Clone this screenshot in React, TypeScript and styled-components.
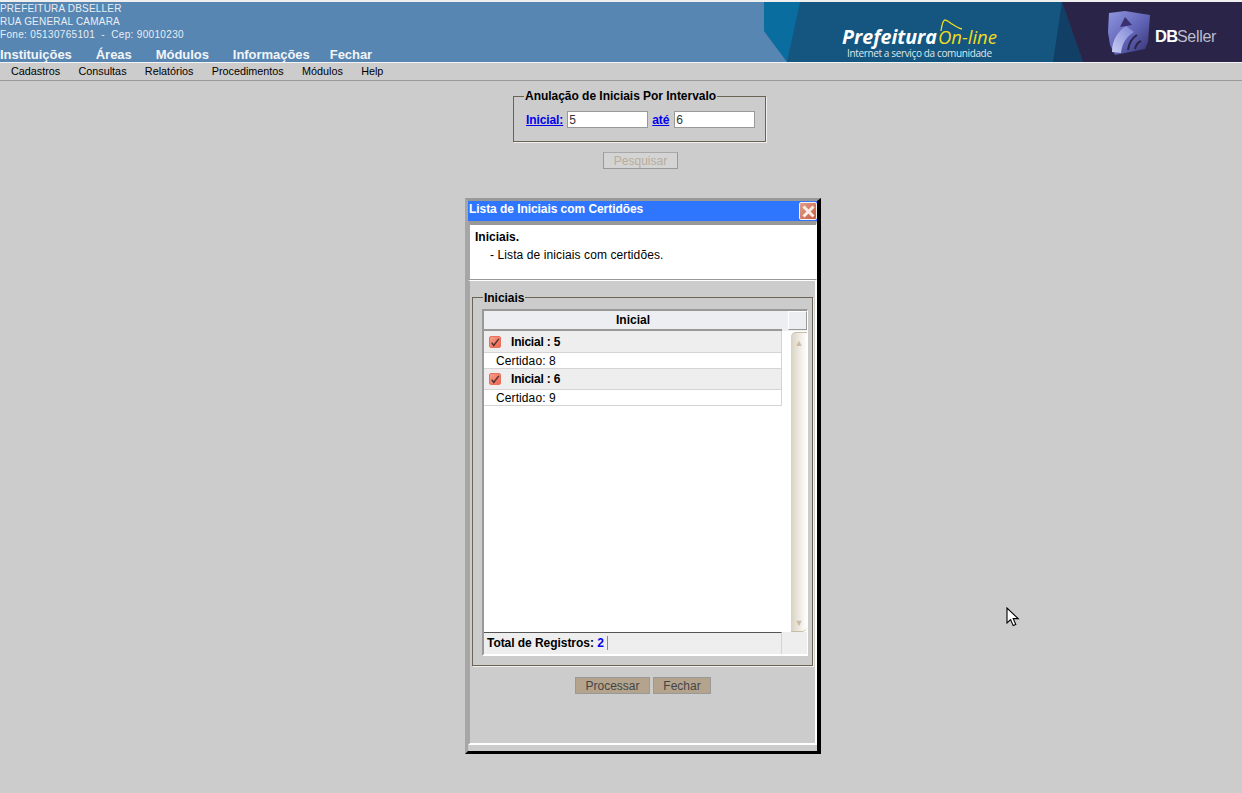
import React from 'react';
import styled, { createGlobalStyle } from 'styled-components';

const GlobalStyle = createGlobalStyle`
  html, body {
    margin: 0;
    padding: 0;
    height: 100%;
    background: #cccccc;
    font-family: "Liberation Sans", Arial, sans-serif;
    overflow: hidden;
  }
`;

const navItems = ['Instituições', 'Áreas', 'Módulos', 'Informações', 'Fechar'];
const menuItems = ['Cadastros', 'Consultas', 'Relatórios', 'Procedimentos', 'Módulos', 'Help'];
const records = [
  { inicial: 5, certidao: 8 },
  { inicial: 6, certidao: 9 },
];

function Banner() {
  return (
    <BannerSvg width="478" height="60" viewBox="0 0 478 60">
      <defs>
        <linearGradient id="cube" x1="0" y1="0" x2="1" y2="1">
          <stop offset="0" stopColor="#8f96e0" />
          <stop offset="0.55" stopColor="#5f62b4" />
          <stop offset="1" stopColor="#34306e" />
        </linearGradient>
        <linearGradient id="sweep" x1="0" y1="1" x2="1" y2="0">
          <stop offset="0" stopColor="#c9cdf4" />
          <stop offset="1" stopColor="#7e84d4" />
        </linearGradient>
      </defs>
      <rect width="478" height="60" fill="#14567f" />
      <polygon points="0,0 36,0 23,60 0,29" fill="#0a6d9f" />
      <polygon points="0,29 23,60 0,60" fill="#5786b3" />
      <polygon points="298,0 319,60 289,60" fill="#123f66" />
      <polygon points="298,0 478,0 478,60 319,60" fill="#2a2548" />
      <text x="78" y="42" fontFamily="'Open Sans', sans-serif" fontStyle="italic" fontWeight="700" fontSize="19" fill="#ffffff" textLength="95" lengthAdjust="spacingAndGlyphs">
        Prefeitura
      </text>
      <text x="174" y="42" fontFamily="'Open Sans', sans-serif" fontStyle="italic" fontSize="19" fill="#f2dc1e" textLength="59" lengthAdjust="spacingAndGlyphs">
        On-line
      </text>
      <path d="M177 29c1-7 2-11 4-11s4 2 7 4 6 4 10 5" fill="none" stroke="#f2dc1e" strokeWidth="1.3" />
      <text x="83" y="55" fontFamily="'Open Sans', sans-serif" fontSize="10" fill="#dfe8ee" textLength="145">
        Internet a serviço da comunidade
      </text>
      <polygon points="345,11 361,9 386,13 384,40 381,47 351,53 346,43 344,30" fill="url(#cube)" />
      <path d="M348 50c0-14 8-22 14-26l8 6c-7 4-12 11-13 21z" fill="url(#sweep)" />
      <polygon points="361,15 368,23 356,25" fill="#3a2f70" />
      <path d="M364 48c1-7 4-12 9-15M371 47c1-4 3-7 6-8" stroke="#2a2548" strokeWidth="2" fill="none" />
      <text x="391" y="40" fontFamily="'Liberation Sans', sans-serif" fontWeight="700" fontSize="16.5" fill="#ffffff" letterSpacing="-0.7">
        DB
      </text>
      <text x="413" y="40" fontFamily="'Liberation Sans', sans-serif" fontSize="16" fill="#bdbdcc" letterSpacing="-0.3">
        Seller
      </text>
    </BannerSvg>
  );
}

function RecordRows({ inicial, certidao }: { inicial: number; certidao: number }) {
  return (
    <>
      <GroupRow>
        <CheckBox>
          <svg width="12" height="12" viewBox="0 0 12 12">
            <path d="M2 5.5l2.5 3.5L10.5 1" fill="none" stroke="#4a3430" strokeWidth="1.7" />
          </svg>
        </CheckBox>
        <GroupLabel>Inicial : {inicial}</GroupLabel>
      </GroupRow>
      <DetailRow>Certidao: {certidao}</DetailRow>
    </>
  );
}

export default function App() {
  return (
    <Page>
      <GlobalStyle />
      <Header>
        <HeaderInfo>
          <AddressBlock>
            <div>PREFEITURA DBSELLER</div>
            <div>RUA GENERAL CAMARA</div>
            <PhoneLine>Fone: 05130765101&nbsp; -&nbsp; Cep: 90010230</PhoneLine>
          </AddressBlock>
          <Nav>
            {navItems.map((item) => (
              <NavItem key={item}>{item}</NavItem>
            ))}
          </Nav>
        </HeaderInfo>
        <Banner />
      </Header>
      <MenuBar>
        {menuItems.map((item) => (
          <MenuItem key={item}>{item}</MenuItem>
        ))}
      </MenuBar>

      <FormArea>
        <RangeFieldset>
          <Legend>Anulação de Iniciais Por Intervalo</Legend>
          <RangeRow>
            <FieldLink>Inicial:</FieldLink>
            <RangeInput value="5" readOnly />
            <FieldLink>até</FieldLink>
            <RangeInput value="6" readOnly />
          </RangeRow>
        </RangeFieldset>
        <SearchButton disabled>Pesquisar</SearchButton>
      </FormArea>

      <Window>
        <TitleBar>
          <TitleText>Lista de Iniciais com Certidões</TitleText>
          <CloseButton>
            <svg width="13" height="13" viewBox="0 0 13 13">
              <path d="M1.5 1.5l10 10M11.5 1.5l-10 10" stroke="#fbeee9" strokeWidth="3" />
            </svg>
          </CloseButton>
        </TitleBar>
        <HelpPanel>
          <HelpTitle>Iniciais.</HelpTitle>
          <HelpText>- Lista de iniciais com certidões.</HelpText>
        </HelpPanel>
        <WindowBody>
          <GridFieldset>
            <GridLegend>Iniciais</GridLegend>
            <GridBox>
              <GridHeader>
                <HeaderCell>Inicial</HeaderCell>
                <CornerCell />
              </GridHeader>
              <GridMiddle>
                <Rows>
                  {records.map((record) => (
                    <RecordRows key={record.inicial} {...record} />
                  ))}
                </Rows>
                <ScrollTrack>
                  <ScrollArrow>▲</ScrollArrow>
                  <ScrollArrow>▼</ScrollArrow>
                </ScrollTrack>
              </GridMiddle>
              <GridFooter>
                <FooterCell>
                  <FooterLabel>
                    Total de Registros: <FooterCount>2</FooterCount>
                  </FooterLabel>
                </FooterCell>
                <FooterSpacer />
              </GridFooter>
            </GridBox>
          </GridFieldset>
          <Actions>
            <ActionButton $width={75}>Processar</ActionButton>
            <ActionButton $width={58}>Fechar</ActionButton>
          </Actions>
        </WindowBody>
      </Window>

      <Cursor width="14" height="20" viewBox="0 0 14 20">
        <path d="M1 1v15l3.6-3.4 2.6 6 2.6-1.1-2.6-5.9h5z" fill="#ffffff" stroke="#000000" strokeWidth="1.1" />
      </Cursor>
    </Page>
  );
}

const Page = styled.div`
  position: relative;
  width: 1242px;
  height: 793px;
  overflow: hidden;
  background: #cccccc;
  border-top: 2px solid #efefef;
  box-sizing: border-box;
`;

const Header = styled.header`
  display: flex;
  justify-content: space-between;
  height: 60px;
  background: #5786b3;
`;

const HeaderInfo = styled.div`
  display: flex;
  flex-direction: column;
  justify-content: space-between;
  color: #ffffff;
`;

const AddressBlock = styled.div`
  font-size: 10px;
  line-height: 13px;
  color: #e9eef4;
  letter-spacing: 0.2px;
`;

const PhoneLine = styled.div`
  letter-spacing: 0.33px;
`;

const Nav = styled.nav`
  display: flex;
  gap: 24px;
  height: 15px;
  line-height: 15px;
`;

const NavItem = styled.span`
  font-size: 13px;
  font-weight: 700;
  color: #f2f5f8;
  letter-spacing: -0.04px;
  &:last-child {
    margin-left: -4px;
  }
`;

const BannerSvg = styled.svg`
  display: block;
  flex: none;
`;

const MenuBar = styled.div`
  display: flex;
  gap: 18.3px;
  box-sizing: content-box;
  height: 15px;
  padding: 0 0 2px 11px;
  align-items: center;
  border-top: 1px solid #f4f4f4;
  border-bottom: 1px solid #9a9a9a;
`;

const MenuItem = styled.span`
  font-size: 10.8px;
  color: #000000;
`;

const FormArea = styled.div`
  display: flex;
  flex-direction: column;
  align-items: center;
  width: 1279px;
  padding-top: 9px;
`;

const RangeFieldset = styled.fieldset`
  box-sizing: border-box;
  width: 253px;
  height: 52px;
  margin: 0;
  padding: 0 0 0 12px;
  border: 1px solid #6b6353;
  box-shadow: 1px 1px 0 #eeeeee;
`;

const Legend = styled.legend`
  margin-left: -2px;
  padding: 0 1px;
  font-size: 12px;
  line-height: 13px;
  font-weight: 700;
  color: #000000;
  letter-spacing: -0.03px;
`;

const GridLegend = styled(Legend)`
  margin-left: 1px;
  padding-top: 2px;
`;

const RangeRow = styled.div`
  display: flex;
  align-items: center;
  gap: 4px;
  margin-top: 8px;
`;

const FieldLink = styled.a`
  font-size: 12px;
  font-weight: 700;
  color: #0000ee;
  text-decoration: underline;
  letter-spacing: -0.1px;
`;

const RangeInput = styled.input`
  box-sizing: border-box;
  width: 81px;
  height: 17px;
  padding: 0 1px;
  border: 1px solid #999999;
  background: #ffffff;
  font-family: "Liberation Sans", Arial, sans-serif;
  font-size: 12px;
  color: #333333;
  &:last-child {
    margin-left: 1px;
  }
`;

const SearchButton = styled.button`
  box-sizing: border-box;
  width: 75px;
  height: 17px;
  margin: 10px 0 0 2px;
  padding: 0;
  border: 1px solid #999999;
  border-top-color: #a8a8a8;
  background: #d4d4d4;
  font-family: "Liberation Sans", Arial, sans-serif;
  font-size: 12px;
  color: #b8ad9a;
`;

const Window = styled.section`
  position: absolute;
  left: 465px;
  top: 196px;
  box-sizing: border-box;
  width: 356px;
  height: 556px;
  display: flex;
  flex-direction: column;
  background: #cccccc;
  border-style: solid;
  border-width: 3px 4px 3px 3px;
  border-color: #999999 #000000 #000000 #a6a6a6;
`;

const TitleBar = styled.div`
  display: flex;
  flex: none;
  justify-content: space-between;
  height: 20px;
  background: #2f76ff;
`;

const TitleText = styled.span`
  padding-left: 1px;
  font-size: 12px;
  font-weight: 700;
  line-height: 16px;
  color: #ffffff;
  letter-spacing: -0.06px;
`;

const CloseButton = styled.span`
  display: flex;
  align-items: center;
  justify-content: center;
  box-sizing: border-box;
  width: 18px;
  height: 18px;
  margin: 1px 0 0;
  border: 1px solid #f2f2f2;
  border-radius: 2px;
  background: linear-gradient(135deg, #e0a08c, #cc5c40);
`;

const HelpPanel = styled.div`
  box-sizing: border-box;
  flex: none;
  height: 59px;
  padding: 4px 0 0 5px;
  border-top: 4px solid #999999;
  border-left: 2px solid #a6a6a6;
  border-right: 1px solid #ffffff;
  border-bottom: 1px solid #999999;
  background: #ffffff;
  color: #000000;
  font-size: 12px;
  line-height: 17px;
`;

const HelpTitle = styled.div`
  font-weight: 700;
  margin-bottom: 1px;
`;

const HelpText = styled.div`
  padding-left: 15px;
  letter-spacing: 0.1px;
`;

const WindowBody = styled.div`
  flex: 1;
  display: flex;
  flex-direction: column;
  align-items: center;
  box-sizing: border-box;
  margin-bottom: 6px;
  padding: 9px 0 0;
  border-top: 1px solid #ffffff;
  border-left: 2px solid #a6a6a6;
  border-right: 2px solid #ffffff;
  border-bottom: 2px solid #ffffff;
`;

const GridFieldset = styled.fieldset`
  box-sizing: border-box;
  width: 341px;
  height: 376px;
  margin: 0;
  padding: 0 0 0 9px;
  border: 1px solid #6b6353;
  box-shadow: 1px 1px 0 #eeeeee;
`;

const GridBox = styled.div`
  box-sizing: border-box;
  width: 326px;
  height: 347px;
  margin-top: 4px;
  display: flex;
  flex-direction: column;
  background: #ffffff;
  border-style: solid;
  border-width: 2px 1px 2px 2px;
  border-color: #999999 #ffffff #ffffff #999999;
`;

const GridHeader = styled.div`
  display: flex;
  flex: none;
  justify-content: space-between;
  height: 20px;
  background: #eceef2;
`;

const HeaderCell = styled.div`
  box-sizing: border-box;
  width: 298px;
  border-bottom: 2px solid #999999;
  text-align: center;
  font-size: 12px;
  line-height: 18px;
  font-weight: 700;
  color: #000000;
`;

const CornerCell = styled.div`
  box-sizing: border-box;
  width: 19px;
  height: 19px;
  border: 1px solid #999999;
  border-top-color: #ffffff;
  border-left-color: #ffffff;
  background: #eceef2;
`;

const GridMiddle = styled.div`
  flex: 1;
  display: flex;
  justify-content: space-between;
  min-height: 0;
`;

const Rows = styled.div`
  width: 298px;
`;

const GroupRow = styled.div`
  box-sizing: border-box;
  display: flex;
  align-items: center;
  height: 22px;
  padding-left: 5px;
  border-right: 1px solid #d4d4d4;
  border-bottom: 1px solid #d4d4d4;
  background: #eeeeee;
  &:not(:first-child) {
    height: 21px;
  }
`;

const CheckBox = styled.span`
  display: flex;
  box-sizing: border-box;
  width: 12px;
  height: 12px;
  border: 1px solid #e8705c;
  border-radius: 2px;
  background: linear-gradient(135deg, #fa9d8c, #ee6650);
`;

const GroupLabel = styled.span`
  margin-left: 10px;
  font-size: 12px;
  font-weight: 700;
  color: #000000;
  letter-spacing: -0.2px;
`;

const DetailRow = styled.div`
  box-sizing: border-box;
  height: 16px;
  padding-left: 12px;
  border-right: 1px solid #d4d4d4;
  border-bottom: 1px solid #d4d4d4;
  background: #ffffff;
  font-size: 12px;
  line-height: 16px;
  color: #000000;
  letter-spacing: 0.1px;
`;

const ScrollTrack = styled.div`
  box-sizing: border-box;
  display: flex;
  flex-direction: column;
  justify-content: space-between;
  align-items: center;
  width: 16px;
  margin: 1px 0 0;
  padding: 4px 0 2px;
  border-top: 1px solid #c8bda8;
  border-bottom: 1px solid #c8bda8;
  border-radius: 5px 0 5px 0;
  background: linear-gradient(90deg, #d9d2c2, #f5f2ec 70%, #ffffff);
`;

const ScrollArrow = styled.span`
  font-size: 9px;
  line-height: 12px;
  color: #c8bca8;
`;

const GridFooter = styled.div`
  display: flex;
  flex: none;
  height: 22px;
`;

const FooterCell = styled.div`
  box-sizing: border-box;
  width: 298px;
  padding-left: 3px;
  border-top: 1px solid #555555;
  border-right: 1px solid #d4d4d4;
  background: #eeeeee;
`;

const FooterLabel = styled.span`
  display: inline-block;
  margin-top: 3px;
  padding-right: 3px;
  border-right: 1px solid #888888;
  font-size: 12px;
  line-height: 14px;
  font-weight: 700;
  color: #000000;
  letter-spacing: -0.05px;
`;

const FooterCount = styled.span`
  color: #0000ee;
`;

const FooterSpacer = styled.div`
  flex: 1;
  background: #eeeeee;
`;

const Actions = styled.div`
  display: flex;
  gap: 3px;
  margin: 11px 0 0 1px;
`;

const ActionButton = styled.button<{ $width: number }>`
  box-sizing: border-box;
  width: ${(props) => props.$width}px;
  height: 17px;
  padding: 0;
  border: 1px solid #999999;
  background: #b4a48e;
  font-family: "Liberation Sans", Arial, sans-serif;
  font-size: 12px;
  color: #444444;
`;

const Cursor = styled.svg`
  position: absolute;
  left: 1006px;
  top: 605px;
`;
